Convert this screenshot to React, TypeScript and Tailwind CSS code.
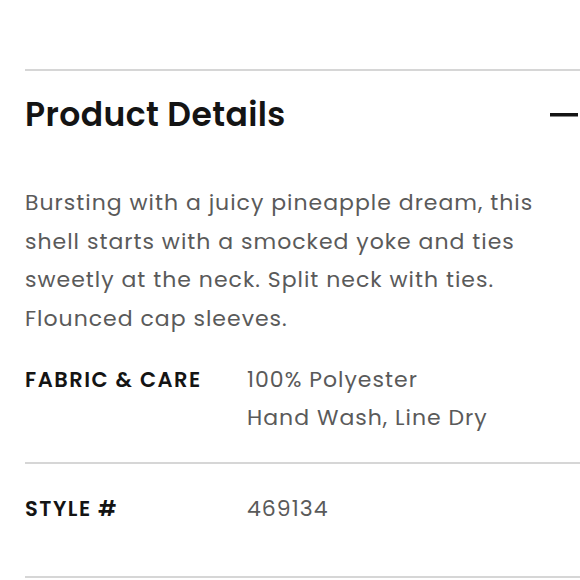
const font = { fontFamily: '"Poppins", Inter, "Noto Sans", sans-serif' };

function MinusIcon() {
  return (
    <svg width="28" height="4" viewBox="0 0 28 4" className="shrink-0 mr-[2px]">
      <rect x="0" y="0" width="28" height="3.5" fill="#141414" />
    </svg>
  );
}

export default function App() {
  return (
    <div className="w-[580px] h-[580px] bg-white overflow-hidden" style={font}>
      <div className="pt-[69px] pl-[25px]">
        <div className="border-t-2 border-[#d6d6d6] w-[555px]">
          <div className="flex items-center justify-between h-[88px]">
            <h2 className="text-[33px] leading-[40px] font-semibold text-[#141414] tracking-[0.4px]">Product Details</h2>
            <MinusIcon />
          </div>
          <p className="text-[22px] leading-[38.6px] text-[#5a5a5a] w-[522px] pt-[25px] tracking-[1px]">
            Bursting with a juicy pineapple dream, this shell starts with a smocked yoke and ties sweetly at
            the neck. Split neck with ties. Flounced cap sleeves.
          </p>
          <div className="flex pt-[23px] pb-[25px] leading-[38px]">
            <div className="w-[222px] text-[21px] font-semibold text-[#141414] tracking-[1.5px]">FABRIC &amp; CARE</div>
            <div className="text-[22px] text-[#5a5a5a] tracking-[1px]">
              <div>100% Polyester</div>
              <div>Hand Wash, Line Dry</div>
            </div>
          </div>
        </div>
        <div className="border-t-2 border-[#d6d6d6] w-[555px]">
          <div className="flex items-start h-[112px] pt-[26px] leading-[38px]">
            <div className="w-[222px] text-[21px] font-semibold text-[#141414] tracking-[1.5px]">STYLE #</div>
            <div className="text-[22px] text-[#5a5a5a] tracking-[1px]">469134</div>
          </div>
        </div>
        <div className="border-t-2 border-[#d6d6d6] w-[555px]" />
      </div>
    </div>
  );
}
